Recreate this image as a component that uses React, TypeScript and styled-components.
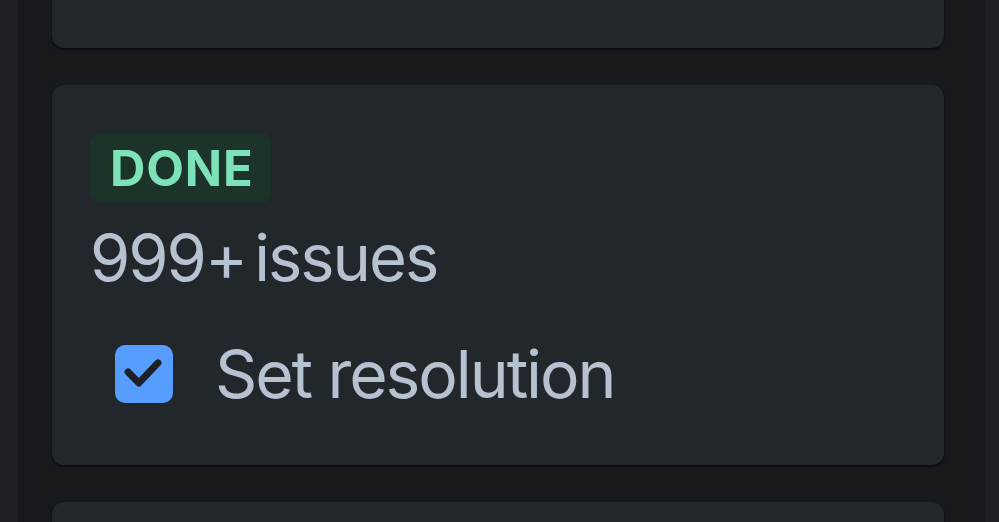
import React from "react";
import styled, { createGlobalStyle } from "styled-components";

const Global = createGlobalStyle`
  html, body { margin: 0; padding: 0; }
  body {
    background: #1d2125;
    font-family: Inter, "Noto Sans", sans-serif;
    height: 522px;
    overflow: hidden;
  }
`;

const Page = styled.div`
  display: flex;
  padding: 0 14px 0 18px;
  height: 522px;
  box-sizing: border-box;
`;

const Column = styled.div`
  flex: 1;
  background: #161a1d;
  display: flex;
  flex-direction: column;
  gap: 37px;
  padding: 0 41px 0 34px;
  overflow: hidden;
`;

const Card = styled.div<{ $clipped?: boolean }>`
  background: #22272b;
  border-radius: ${(p) => (p.$clipped ? "0 0 12px 12px" : "12px")};
  box-shadow: 0 2px 2px rgba(3, 4, 4, 0.55), 0 0 1px rgba(3, 4, 4, 0.5);
  flex-shrink: 0;
  display: flex;
  flex-direction: column;
  align-items: flex-start;
  padding: 48px 38px 62px;
  box-sizing: border-box;
`;

const Stub = styled(Card)`
  height: 48px;
  padding: 0;
`;

const Lozenge = styled.span`
  display: inline-flex;
  align-items: center;
  height: 70px;
  padding: 0 18px 0 20px;
  border-radius: 10px;
  background: #1c3329;
  color: #7ee2b8;
  font-weight: 700;
  font-size: 49px;
  letter-spacing: 0.8px;
  text-transform: uppercase;
  box-sizing: border-box;
`;

const Count = styled.div`
  margin-top: 16px;
  font-size: 65px;
  line-height: 78px;
  color: #b6c2cf;
  letter-spacing: -2px;
  word-spacing: -8px;
`;

const Row = styled.label`
  margin-top: 48px;
  display: flex;
  align-items: center;
  gap: 42px;
  padding-left: 25px;
  height: 58px;
`;

const Box = styled.span`
  width: 58px;
  height: 58px;
  border-radius: 10px;
  background: #579dff;
  display: flex;
  align-items: center;
  justify-content: center;
  flex-shrink: 0;
`;

const RowText = styled.span`
  font-size: 66px;
  line-height: 58px;
  color: #b6c2cf;
  letter-spacing: -2.1px;
`;

export default function App() {
  return (
    <>
      <Global />
      <Page>
        <Column>
          <Stub $clipped />
          <Card>
            <Lozenge>Done</Lozenge>
            <Count>999+ issues</Count>
            <Row>
              <Box>
                <svg width="58" height="58" viewBox="0 0 24 24">
                  <path
                    d="M5.4 11.2 L9.9 15.7 L17.8 7.4"
                    fill="none"
                    stroke="#1d2125"
                    strokeWidth="2.9"
                    strokeLinecap="round"
                    strokeLinejoin="round"
                  />
                </svg>
              </Box>
              <RowText>Set resolution</RowText>
            </Row>
          </Card>
          <Card />
        </Column>
      </Page>
    </>
  );
}
